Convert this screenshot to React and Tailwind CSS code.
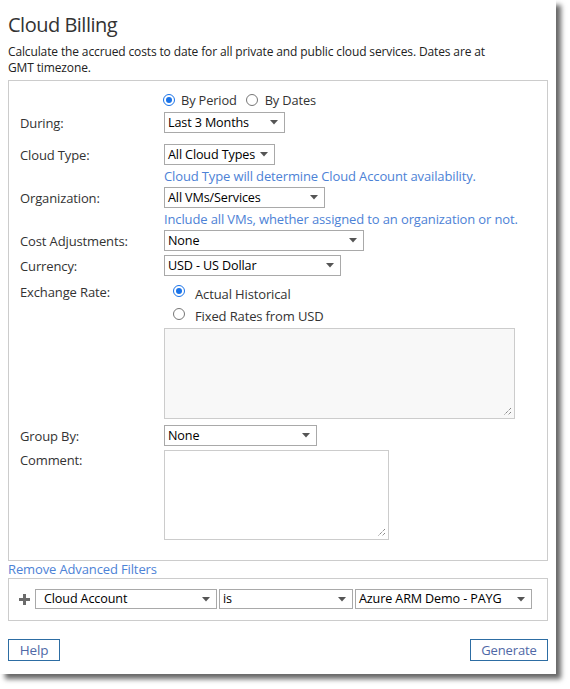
function Arrow() {
  return (
    <svg width="8" height="5" viewBox="0 0 8 5" className="shrink-0">
      <path d="M0 0 H8 L4 4.5 Z" fill="#555" />
    </svg>
  );
}

function Select({ w, children, pl = "pl-[3px]", h = "h-[21px]" }) {
  return (
    <div
      className={`flex items-center justify-between border border-[#a9a9a9] bg-white pr-[6px] text-[12.6px] leading-[16px] text-black ${h} ${pl} ${w}`}
    >
      <span className="whitespace-nowrap">{children}</span>
      <Arrow />
    </div>
  );
}

function Radio({ checked }) {
  if (checked) {
    return (
      <span className="flex h-[12px] w-[12px] shrink-0 items-center justify-center rounded-full border-[1.5px] border-[#1a73e8] bg-white">
        <span className="h-[6px] w-[6px] rounded-full bg-[#1a73e8]" />
      </span>
    );
  }
  return <span className="block h-[12px] w-[12px] shrink-0 rounded-full border border-[#767676] bg-white" />;
}

function Grip() {
  return (
    <svg width="9" height="9" viewBox="0 0 9 9" className="absolute bottom-[2px] right-[2px]">
      <path d="M8 1 L1 8 M8 5 L5 8" stroke="#555" strokeWidth="1" strokeDasharray="1 1" />
    </svg>
  );
}

function Row({ label, children, className = "" }) {
  return (
    <div className={`flex items-center ${className}`}>
      <div className="w-[144px] shrink-0 text-[13px] leading-[16px] text-[#333]">{label}</div>
      {children}
    </div>
  );
}

export default function App() {
  return (
    <div className="min-h-[689px] bg-white font-['Open_Sans',sans-serif] tracking-[-0.13px]">
      <div className="w-[556px] bg-white px-[8px] pb-[13px] shadow-[5px_5px_5px_rgba(0,0,0,0.6)]">
        <h1 className="pt-[13px] text-[20px] leading-[24px] tracking-[-0.5px] text-[#333]">Cloud Billing</h1>
        <p className="mt-[7px] text-[12px] leading-[16px] text-[#222]">
          Calculate the accrued costs to date for all private and public cloud services. Dates are at
          <br />
          GMT timezone.
        </p>

        <div className="mt-[4px] border border-[#cccccc] pb-[20px] pl-[11px] pt-[11px]">
          <div className="flex items-center pl-[144px] text-[12.8px] leading-[16px] text-[#333]">
            <span className="ml-[-1px]"><Radio checked /></span>
            <span className="ml-[6px]">By Period</span>
            <span className="ml-[9px]"><Radio /></span>
            <span className="ml-[7px]">By Dates</span>
          </div>

          <Row label="During:" className="mt-[4px]">
            <Select w="w-[121px]">Last 3 Months</Select>
          </Row>

          <Row label="Cloud Type:" className="mt-[11px]">
            <Select w="w-[111px]">All Cloud Types</Select>
          </Row>
          <div className="mt-[3px] pl-[144px] text-[13px] leading-[16px] text-[#4d82d6]">
            Cloud Type will determine Cloud Account availability.
          </div>

          <Row label="Organization:" className="mt-[3px]">
            <Select w="w-[161px]">All VMs/Services</Select>
          </Row>
          <div className="mt-[3px] pl-[144px] text-[13px] leading-[16px] text-[#4d82d6]">
            Include all VMs, whether assigned to an organization or not.
          </div>

          <Row label="Cost Adjustments:" className="mt-[3px]">
            <Select w="w-[200px]">None</Select>
          </Row>

          <Row label="Currency:" className="mt-[4px]">
            <Select w="w-[177px]">USD - US Dollar</Select>
          </Row>

          <div className="mt-[8px] flex items-start">
            <div className="w-[144px] shrink-0 text-[13px] leading-[16px] text-[#333]">Exchange Rate:</div>
            <div className="flex flex-col">
              <div className="mt-[1px] flex items-start pl-[9px] text-[13px] leading-[16px] text-[#333]">
                <span><Radio checked /></span>
                <span className="ml-[10px] mt-[1px]">Actual Historical</span>
              </div>
              <div className="mt-[5px] flex items-start pl-[9px] text-[13px] leading-[16px] text-[#333]">
                <span className="mt-[1px]"><Radio /></span>
                <span className="ml-[10px] mt-[1px]">Fixed Rates from USD</span>
              </div>
              <div className="relative mt-[4px] h-[91px] w-[351px] border border-[#cccccc] bg-[#f8f8f8]">
                <Grip />
              </div>
            </div>
          </div>

          <Row label="Group By:" className="mt-[6px]">
            <Select w="w-[153px]">None</Select>
          </Row>

          <div className="mt-[4px] flex items-start">
            <div className="mt-[2px] w-[144px] shrink-0 text-[13px] leading-[16px] text-[#333]">Comment:</div>
            <div className="relative h-[90px] w-[225px] border border-[#cccccc] bg-white">
              <Grip />
            </div>
          </div>
        </div>

        <div className="text-[13px] leading-[16px] text-[#4d82d6]">Remove Advanced Filters</div>

        <div className="mt-[1px] flex items-center border border-[#cccccc] pb-[11px] pl-[10px] pt-[10px]">
          <svg width="11" height="11" viewBox="0 0 11 11" className="shrink-0">
            <path d="M5.5 0 V11 M0 5.5 H11" stroke="#6b6b6b" strokeWidth="3" />
          </svg>
          <div className="ml-[5px] flex gap-[2px]">
            <Select w="w-[182px]" pl="pl-[8px]" h="h-[20px]">Cloud Account</Select>
            <Select w="w-[134px]" h="h-[20px]">is</Select>
            <Select w="w-[177px]" h="h-[20px]">Azure ARM Demo - PAYG</Select>
          </div>
        </div>

        <div className="mt-[18px] flex justify-between">
          <button className="h-[22px] w-[52px] border border-[#2d6da3] bg-white text-[13.5px] leading-[16px] text-[#4f68a6]">Help</button>
          <button className="h-[22px] w-[78px] border border-[#2d6da3] bg-white text-[13px] leading-[16px] text-[#4f68a6]">Generate</button>
        </div>
      </div>
    </div>
  );
}
